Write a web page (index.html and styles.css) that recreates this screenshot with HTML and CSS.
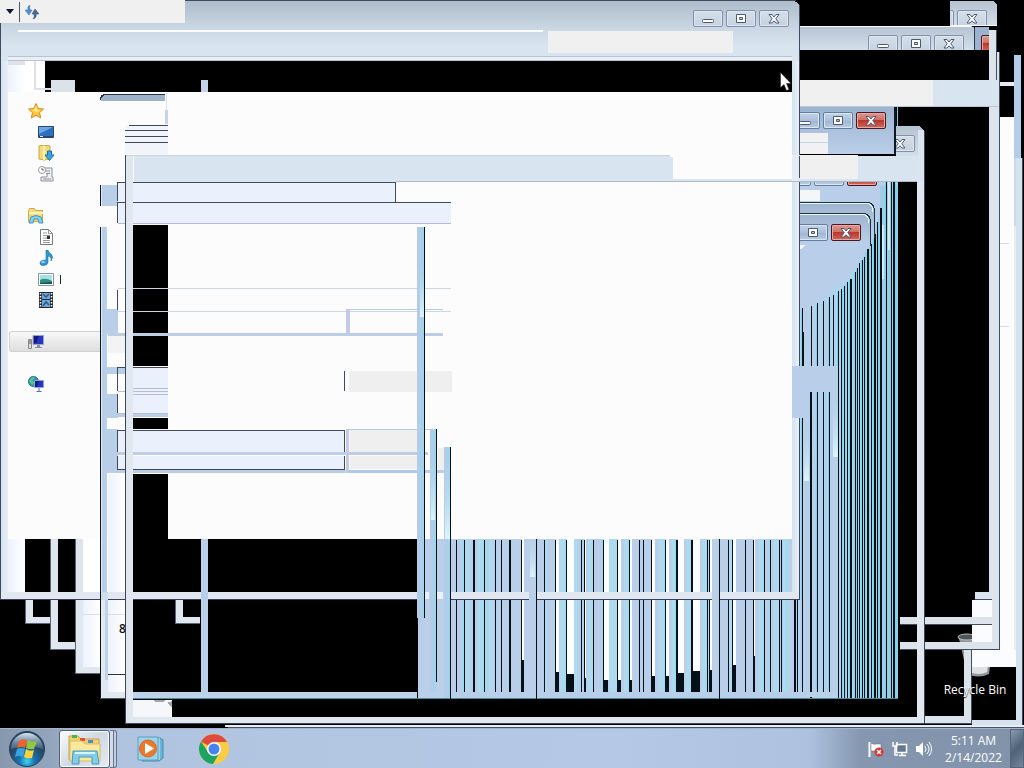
FILE: index.html
```html
<!DOCTYPE html>
<html lang="en">
<head>
<meta charset="utf-8">
<title>Desktop</title>
<meta name="viewport" content="width=device-width, initial-scale=1">
<link rel="stylesheet" href="styles.css">
</head>
<body class="screen">
<svg class="defs" width="0" height="0" aria-hidden="true">
  <symbol id="min" viewBox="0 0 14 10"><rect x="1.500" y="5.500" width="11" height="3" rx="1" fill="#fff" stroke="#4b5876"/></symbol>
  <symbol id="max" viewBox="0 0 14 10"><path d="M2.500 .5h9v8h-9zM5.500 3.500h3v2h-3z" fill="#fff" stroke="#4b5876" fill-rule="evenodd"/></symbol>
  <symbol id="close" viewBox="0 0 14 10"><path d="M2 .5h3l2 2.500 2-2.500h3L8.800 4.700 12 9H9L7 6.800 5 9H2l3.200-4.300z" fill="#fff" stroke="#4b5876"/></symbol>
</svg>
<main class="desktop">
  <svg class="scene" width="1024" height="728" viewBox="0 0 1024 728" shape-rendering="crispEdges" aria-hidden="true">
    <defs>
      <linearGradient id="title" x2="0" y2="1"><stop stop-color="#aebccb"/><stop offset=".45" stop-color="#c9d6e3"/><stop offset=".75" stop-color="#d8e5f0"/></linearGradient>
      <linearGradient id="cap" x2="0" y2="1"><stop stop-color="#b5c2d0"/><stop offset="1" stop-color="#d3dfeb"/></linearGradient>
      <linearGradient id="blue" x2="0" y2="1"><stop stop-color="#9db4ce"/><stop offset="1" stop-color="#bacfea"/></linearGradient>
      <linearGradient id="pale"><stop stop-color="#edf2ff"/><stop offset="1" stop-color="#fff"/></linearGradient>
      <linearGradient id="edge"><stop stop-color="#d4e3f1"/><stop offset="1" stop-color="#e9eff6"/></linearGradient>
      <linearGradient id="strip"><stop stop-color="#bac9e7"/><stop offset="1" stop-color="#9dd6ee"/></linearGradient>
      <linearGradient id="shine" x2="0" y2="1"><stop stop-color="#b7dcf3" stop-opacity="0"/><stop offset="1" stop-color="#def5fa"/></linearGradient>
      <linearGradient id="fan"><stop stop-color="#b9cfe9"/><stop offset=".5" stop-color="#a8d6ef"/><stop offset="1" stop-color="#9bc9e2"/></linearGradient>
    </defs>

    <!-- rightmost window -->
    <path fill="#fcfcfc" d="M1000 117h14v550h-42v-67h28z"/>
    <path fill="#e6e9ef" d="M1000 82h14v4h-14z"/>
    <path fill="#d5e3ef" d="M1015 158h7v567H972v-5h43z"/>
    <path fill="#b3cce8" d="M1014 55h7v103h-7z"/>
    <path fill="#c7daef" d="M1014 158h2v68h-2z"/>
    <path fill="#e6edf3" d="M1014 226h2v441h-2z"/>
    <path fill="#000" d="M972 667h44v53h-44z"/>
    <path fill="#3e4a5c" d="M1022 158h1v567h-1z"/>
    <path fill="#d8dde3" d="M1000 243h9v1h-9zM1000 326h9v1h-9z"/>

    <!-- window behind, right part -->
    <path fill="url(#cap)" d="M950 1h42q4 0 5 5v20h-47z"/>
    <path fill="url(#cap)" d="M800 26h170q4 0 5 4v20H800z"/>
    <path fill="#f5f9fc" d="M800 26h171v1H800zM950 25h47v1h-47z"/>
    <path fill="#9bb3cf" d="M975 27h14v23h-14z"/>
    <path fill="#2f3847" d="M974 28h1v22h-1z"/>
    <path fill="#dce3eb" d="M989 30h8v22h2v598H900v-8h89V107h-53V80h53z"/>
    <path fill="#414c5d" d="M996 30h1v50h-1zM999 52h1v598h-1zM900 649h100v1H900z"/>
    <path fill="#d8e5f0" d="M800 80h198v27H800z"/>
    <path fill="#f0f0f0" d="M800 80h133v27H800z"/>
    <path fill="#bac6d3" d="M800 106h198v1H800z"/>
    <path fill="#dce3eb" d="M900 617h92v7h-92z"/>
    <path fill="#414c5d" d="M900 624h92v1h-92z"/>
    <path fill="#d9e4ee" d="M975 592h17v7h-17z"/>
    <path fill="#fafcff" d="M972 600h20v17h-20zM972 625h20v17h-20z"/>
    <path fill="#414c5d" d="M975 599h17v1h-17z"/>
    <g shape-rendering="auto">
      <path d="M960 642l7 32q11 5 22 0l3-24h-20v-13h-14z" fill="#92979a"/>
      <path d="M964 644l5 28q10 4 18 0l2-15-9 5-12-14z" fill="#dfe2e2"/>
      <ellipse cx="967" cy="637" rx="9" ry="3" fill="#4f5557" stroke="#b9c0c2"/>
    </g>
    <path fill="#fafcff" d="M972 625h20v17h-20zM972 650h44v17h-44z"/>
    <path fill="#dce3eb" d="M900 642h99v7h-99zM964 650h7v73h-47v-7h40z"/>
    <path fill="#414c5d" d="M900 649h99v1h-99zM971 650h1v74h-1zM924 723h48v1h-48z"/>

    <!-- blue window pieces -->
    <path fill="url(#blue)" d="M800 107h95v47h-95z"/>
    <path fill="#f1f1f3" d="M800 133h28v21h-28z"/>
    <path fill="#c6d4e8" d="M800 142h28v1h-28z"/>
    <path fill="#0c1824" d="M894 107h2v48h-2z"/><path fill="#78cbdc" d="M897 107h1v20h-1z"/>
    <path fill="url(#cap)" d="M896 126h22q5 1 6 6v25h-28z"/>

    <!-- fan of window edges -->
    <path fill="#b9cfe9" d="M792 182h106v516H792z"/>
    <path fill="url(#fan)" d="M800 308C844 290 874 260 880 208V186h18v512h-98z"/>
    <path fill="#f4f6f8" d="M800 190h20v11h-20z"/>
    <path fill="url(#blue)" d="M800 202h68q6 0 6 7v24h-74z"/>
    <path fill="none" stroke="#1d3340" d="M800 202.500h67q7 0 7.500 8v27"/>
    <path fill="none" stroke="#eaf5fb" d="M800 203.500h66q7 0 7 8"/>
    <path fill="url(#blue)" d="M800 213h64q6 0 6 7v24h-70z"/>
    <path fill="none" stroke="#1d3340" d="M800 213.500h63q7 0 7.500 8v24"/>
    <path fill="none" stroke="#edf7fc" d="M800 214.500h62q7 0 7 8"/>
    <path fill="#f0f5fa" d="M800 245h5l-3 4h-2z"/>
    <path fill="#d0ecf8" d="M882 225h2v54h-2zM888 182h2v68h-2z"/>
    <path stroke="#78d6ee" d="M801.500 310V698M816.500 305V690M828.500 300V690M837.500 295V698M842.500 290V698M845.500 284V698M849.500 281V698M854.500 274V698M856.500 270V698M861.500 260V698M865.500 252V698M869.500 248V698M873.500 240V698M878.500 222V698M885.500 182V698M890.500 182V698M895.500 182V698M897.500 182V698"/>
    <path stroke="#061019" d="M802.500 308V698M811.500 306V692M817.500 303V692M823.500 301V692M829.500 297V692M833.500 295V366M838.500 291V698M841.500 289V698M844.500 286V698M847.500 282V698M850.500 279V698M851.500 279V698M855.500 272V698M857.500 268V698M859.500 263V698M862.500 260V698M864.500 257V698M867.500 249V698M868.500 249V698M871.500 244V698M874.500 238V698M875.500 234V698M877.500 222V698M880.500 208V698M881.500 208V698M886.500 182V698M891.500 182V698M893.500 182V698M894.500 182V698"/>
    <path stroke="#061019" stroke-width="2" d="M811 392V698M803 332V366"/>
    <path fill="#b9cfe9" d="M792 366h47v26h-34v26h-13zM830 392h8v306h-8z"/>
    <path fill="url(#shine)" d="M833 400h5v57h-5z"/><path fill="url(#shine)" d="M804 430h5v51h-5z"/>
    <path fill="#061019" d="M838 366h1v332h-1z"/>
    <path fill="#b9d2ea" d="M804 692h34v5h-34z"/>
    <path fill="#3c94a4" d="M804 698h94v1h-94z"/>

    <!-- large explorer window -->
    <path fill="url(#title)" d="M0 1h793q6 1 7 7v53H0z"/>
    <path fill="#3f4c60" d="M0 0h796v1H0zM0 8h1v592H0zM799 5h1v361h-1zM799 418h1v182h-1z"/>
    <path fill="#fcfdff" d="M18 30h525v2H18z"/>
    <path fill="#b7c5d3" d="M8 56h784v1H8zM8 60h784v1H8z"/>
    <path fill="#eceef5" d="M8 57h784v3H8z"/>
    <path fill="#f0f0f0" d="M548 31h185v22H548z"/>
    <path fill="#000" d="M45 61h747v31H45z"/>
    <path fill="url(#edge)" d="M1 61h7v539H1z"/><path fill="url(#edge)" d="M792 61h7v305h-7zM792 418h7v182h-7z"/>
    <path fill="#fff" d="M8 61h37v31H8z"/><path fill="url(#pale)" d="M8 65h17v27H8z"/>
    <path fill="#dfe0e9" d="M8 61h17v4H8zM34 61h2v27h15v2H34z"/>
    <path fill="#dce2ea" d="M51 80h24v12H51z"/><path fill="#c4d3e8" d="M201 80h7v12h-7z"/>
    <path fill="#fcfcfc" d="M8 92h784v447H8z"/>
    <path fill="#9eb3c8" d="M101 101q0-6 5-6h59v6h-64z"/><path fill="#27313e" d="M100 100q0-6 6-6h59v1h-59q-5 1-5 5z"/>
    <path fill="#dbe0e7" d="M166 93h1v17h-1z"/><path fill="#c7d4e6" d="M165 110h3v14h-3z"/>
    <path fill="#f1f4fb" d="M125 125h43v29h-43z"/>
    <path stroke="#3e4a5b" d="M129 125.500h39M125 130.500h43M125 136.500h43M125 142.500h43"/>

    <!-- dropped content below the large window -->
    <path fill="#fff" d="M83 539h42v153h-24v-25H83z"/><path fill="url(#pale)" d="M8 539h17v53H8z"/><path fill="url(#pale)" d="M83 600h17v67H83z"/>
    <path fill="#000" d="M25 539h25v53H25zM58 539h17v53H58zM133 539h284v153H133z"/>
    <path fill="#dfe4ed" d="M50 539h8v53h-8zM75 539h8v53h-8z"/>
    <path fill="#e1e7ee" d="M26 600h7v17h17v6H26zM51 600h7v42h17v7H51zM76 600h7v67h17v6H76zM176 600h7v17h17v6h-24z"/>
    <path fill="#5a6678" d="M25 600h1v24h-1zM25 623h25v1H25zM50 539h1v110h-1zM50 649h25v1H50zM75 539h1v135h-1zM75 673h25v1H75zM175 600h1v24h-1zM175 623h25v1h-25z"/>
    <path fill="#d9dfe6" d="M83 614h42v1H83z"/>

    <!-- second window, left part -->
    <path fill="#e4eaf1" d="M101 185h1v21h-1zM101 227h1v471h-1z"/>
    <path fill="#b9cfe9" d="M102 185h16v21h-16zM102 227h5v465h-5zM107 309h11v25h-11zM107 367h18v7h-18zM107 394h11v24h-11zM107 429h11v44h-11z"/>
    <path fill="url(#pale)" d="M108 474h17v118h-17z"/><path fill="url(#pale)" d="M108 600h17v92h-17z"/>
    <path fill="#e2e8ef" d="M102 600h6v92h17v6h-23z"/><path fill="#bdd3ea" d="M105 600h3v80h-3z"/>
    <path fill="#2c3542" d="M108 674h17v1h-17z"/>
    <path fill="#d9dfe6" d="M108 614h17v1h-17z"/>
    <path fill="#f3f3f3" d="M108 336h17v17h-17z"/>

    <!-- front window -->
    <path fill="#c8d1da" d="M125 155h675v1H125z"/>
    <path fill="#d8e5f0" d="M134 156h790v26H134z"/>
    <path fill="#f0f0f0" d="M673 155h185v24H673z"/><path fill="#fcfcfc" d="M673 155h119v24H673z"/>
    <path fill="#e6ecf3" d="M792 156h7v25h-7z"/><path fill="#3f4c60" d="M799 156h1v22h-1z"/>
    <path fill="#acbccb" d="M396 181h521v1H396z"/>
    <path fill="#fcfcfc" d="M670 155h3v2h-3zM396 182h396v20H396zM451 202h341v23H451z"/>
    <path fill="#eaf1fd" d="M118 183h277v19H118zM118 203h333v20H118zM133 367h35v49h-35zM118 431h227v22H118zM118 456h227v13H118z"/>
    <path fill="none" stroke="#3f4a5d" d="M117.500 201V182.500H395.500V202M117.500 223V202.500H451M117.500 290v20M168 367.500H117.500V391M117.500 394V413M117.500 452V430.500H344.500V452M117.500 456V469.500H344.500V456M344.500 371v20"/>
    <path stroke="#b2bfce" d="M118 223.500h333M133 388.500h35M118 391.500h50M133 394.500h35M118 413.500h50"/>
    <path stroke="#cdd6df" d="M118 288.500h333M118 311.500h333"/>
    <path stroke="#bccde4" stroke-width="3" d="M108 334.500h335M118 415.500h50M108 453.500h320M108 471.500h336"/>
    <path fill="#c3cbe8" d="M346 309h4v25h-4zM346 429h3v42h-3z"/>
    <path fill="#b9cad9" d="M350 309h93v1h-93zM349 429h82v1h-82z"/>
    <path fill="#efefef" d="M349 371h103v21H349zM350 430h67v22h-67zM350 456h67v13h-67zM438 448h6v22h-6z"/>
    <path fill="#000" d="M133 225h35v63h-35zM133 289h35v22h-35zM133 312h35v21h-35zM133 336h35v30h-35zM133 418h35v11h-35zM133 474h35v65h-35zM133 699h784v18H133z"/>
    <path fill="#aecaeb" d="M349 470h68v3h-68z"/>

    <!-- lower stripes -->
    <path fill="#b9cfe9" d="M418 539h374v159H418zM792 600h12v98h-12z"/>
    <path fill="#aed9ef" d="M464 539h6v153h-6zM478 539h6v153h-6zM489 539h4v153h-4zM544 539h3v153h-3zM560 539h6v153h-6zM574 539h3v153h-3zM588 539h5v153h-5zM609 539h8v153h-8zM624 539h5v153h-5zM658 539h6v153h-6zM672 539h4v153h-4zM686 539h5v153h-5zM702 539h5v153h-5zM728 539h4v153h-4zM759 539h5v153h-5zM774 539h5v153h-5zM783 539h5v153h-5zM797 600h3v92h-3z"/>
    <path fill="#061019" d="M522 660h2v32h-2zM556 672h3v20h-3zM567 674h7v18h-7zM585 678h1v14h-1zM604 680h4v12h-4zM618 680h3v12h-3zM630 680h2v12h-2zM652 676h3v16h-3zM666 676h3v16h-3zM678 673h6v19h-6zM693 671h7v21h-7zM710 670h2v22h-2zM733 665h3v27h-3zM754 656h1v36h-1z"/>
    <path fill="#fdfeff" d="M522 539h2v121h-2zM556 539h3v133h-3zM567 539h7v135h-7zM585 539h1v139h-1zM604 539h5v141h-5zM618 539h3v141h-3zM630 539h2v141h-2zM652 539h3v137h-3zM666 539h3v137h-3zM678 539h6v134h-6zM693 539h7v132h-7zM710 539h2v131h-2zM733 539h3v126h-3zM754 539h1v117h-1z"/>
    <path stroke="#8ce0f1" d="M463.500 540V692M483.500 540V692M487.500 540V692M565.500 540V692M580.500 540V692M602.500 540V692M628.500 540V692M664.500 540V692M675.500 540V692M706.500 540V692M763.500 540V692M769.500 540V692M786.500 540V692"/>
    <path stroke="#061019" d="M456.500 540V692M464.500 540V692M484.500 540V692M495.500 540V692M501.500 540V692M521.500 540V692M544.500 540V692M555.500 540V692M566.500 540V692M581.500 540V692M584.500 540V692M593.500 540V692M603.500 540V692M617.500 540V692M629.500 540V692M639.500 540V692M643.500 540V692M651.500 540V692M665.500 540V692M707.500 540V692M709.500 540V692M728.500 540V692M732.500 540V692M745.500 540V692M753.500 540V692M764.500 540V692M770.500 540V692M779.500 540V692M781.500 540V692M797.500 600V692M802.500 540V692"/>
    <path stroke="#061019" stroke-width="2" d="M474 540V692M510 540V692M677 540V692M692 540V692M795 600V692"/>
    <path fill="#bed3e9" d="M133 692h284v6H133z"/>

    <!-- lower frame of the large window -->
    <path fill="#e0e7f0" d="M1 592h798v7H1z"/><path fill="#35435a" d="M0 599h800v1H0z"/>
    <path fill="#b9d0e8" d="M201 539h7v153h-7zM529 539h7v159h-7zM712 539h7v159h-7zM425 592h25v106h-25z"/>
    <path fill="url(#shine)" d="M530 539h5v38h-5z"/>
    <path fill="#eaf0f6" d="M425 592h4v7h-4zM437 592h6v7h-6z"/>
    <path fill="#438f9d" d="M133 698h765v1H133z"/>
    <path fill="#061019" d="M536 539h1v160h-1zM719 539h1v160h-1z"/>
    <path fill="url(#strip)" d="M417 227h7v391h-7z"/><path fill="url(#strip)" d="M430 429h6v263h-6z"/><path fill="url(#strip)" d="M444 447h6v251h-6z"/>
    <path fill="url(#shine)" d="M420 265h4v52h-4z"/><path fill="url(#shine)" d="M431 460h4v60h-4z"/><path fill="url(#shine)" d="M445 460h5v79h-5z"/>
    <path fill="#061019" d="M424 227h1v391h-1zM436 429h1v253h-1zM450 447h1v252h-1z"/>

    <!-- second window edge over the large frame -->
    <path fill="#cfdeed" d="M101 592h7v8h-7z"/>
    <path fill="#10161f" d="M100 185h1v21h-1zM100 227h1v472h-1z"/><path fill="#4a5566" d="M100 698h25v1h-25z"/>

    <!-- front window frame -->
    <path fill="#e0e7ee" d="M126 156h7v561h784V182h7v541H126z"/>
    <path fill="#dce5ef" d="M918 130h6v52h-6z"/>
    <path fill="#3b4656" d="M125 155h1v569h-1zM125 723h800v1H125zM924 131h1v593h-1z"/>
    <path fill="#f5f7fb" d="M133 700h39v17h-39z"/><path fill="#9aabb0" d="M153 700h12l-2 2h-8zM167 703l5-2v6z"/>
    <path fill="#e7edf3" d="M225 725h799v2H225z"/><path fill="#465366" d="M228 727h796v1H228z"/>
    <path fill="#222" d="M60 275h1v9h-1z"/>
  </svg>

  <div class="toolbar">
    <button class="tool drop" aria-label="Menu"><svg width="8" height="5" viewBox="0 0 8 5"><path d="M0 0h8L4 5z" fill="#10182c"/></svg></button>
    <button class="tool refresh" aria-label="Refresh"><svg width="14" height="14" viewBox="0 0 14 14"><path d="M5 0Q2 1 3 5H0l4 5 3-5H5q-1-3 0-5z" fill="#538fce" stroke="#376da8" stroke-width=".5"/><path d="M8 14q4-1 3-5h3l-4-5-3 5h2q1 3-1 5z" fill="#456b96" stroke="#304b6e" stroke-width=".5"/></svg></button>
  </div>

  <nav class="places" aria-label="Places">
    <a class="place head" href="#" aria-label="Favorites"><svg viewBox="0 0 16 16"><path d="M8 .5l2.200 5 5.300.5-4 3.700 1.200 5.300L8 12.200 3.300 15l1.200-5.300-4-3.700 5.300-.5z" fill="#ffc83e" stroke="#d88a20"/><path d="M8 2l1 5 4 0-4 2-5-2 3-1z" fill="#ffea8a"/></svg></a>
    <a class="place" href="#" aria-label="Desktop"><svg viewBox="0 0 16 16"><path d="M.5 2.500h15v11H.5z" fill="#2e6fc0" stroke="#244a78"/><path d="M1 3h14L1 10z" fill="#6da6e4"/><path d="M1 12h14v2H1z" fill="#234672"/><path d="M2 12h3v1H2z" fill="#e7f3fb"/></svg></a>
    <a class="place" href="#" aria-label="Downloads"><svg viewBox="0 0 16 16"><path d="M1 1l5-1 6 1v13l-6 1-5-1z" fill="#f3db77" stroke="#c5a448"/><path d="M6 1v14" stroke="#fff2ae" stroke-width="2"/><path d="M9.500 6h4v4H16l-4.500 5.500L7 10h2.500z" fill="#3aa3e3" stroke="#1b70ad"/></svg></a>
    <a class="place" href="#" aria-label="Recent Places"><svg viewBox="0 0 16 16"><path d="M5 2h9v9h1v4H3v-4h6V8" fill="#eff0f2" stroke="#8b8f96"/><path d="M7 5h5M8 7.500h4M5 13h8" stroke="#8b8f96"/><circle cx="4" cy="4" r="3.500" fill="#fff" stroke="#959aa2"/><path d="M4 2v2h2" fill="none" stroke="#666"/></svg></a>
    <a class="place head gap" href="#" aria-label="Libraries"><svg viewBox="0 0 16 16"><path d="M.5 2.500l1-2h5l1 2h7v11H.5z" fill="#f4da7c" stroke="#d1a944"/><path d="M1 5h14" stroke="#fff4b8" stroke-width="2"/><path d="M3 9q5-3 10 0l2 6h-4l-1-4H6l-1 4H1z" fill="#86d0ef" stroke="#4094c2"/></svg></a>
    <a class="place" href="#" aria-label="Documents"><svg viewBox="0 0 16 16"><path d="M2.500.5h8l4 4v11h-12z" fill="#fff" stroke="#747a80"/><path d="M10.500.5v4h4M5 4h4M5 6.500h7M5 9h4M5 11.500h7M5 13.500h7" fill="none" stroke="#999"/><path d="M9 7h3v3H9z" fill="#333"/></svg></a>
    <a class="place" href="#" aria-label="Music"><svg viewBox="0 0 16 16"><path d="M8 0h2q0 2 3 4 3 3 0 7 1-4-3-5v6q0 3-4 3.500-4 .5-4-2.500 0-3 6-3z" fill="#2f98d4" stroke="#1b6d9f" stroke-width=".6"/><ellipse cx="5" cy="12" rx="2" ry="1" fill="#90d3f2"/></svg></a>
    <a class="place" href="#" aria-label="Pictures"><svg viewBox="0 0 16 16"><path d="M.5 2.500h15v12H.5z" fill="#fff" stroke="#8597a3"/><path d="M2 4h12v9H2z" fill="#a7def0"/><path d="M2 9q5-3 12 1v3H2z" fill="#2c936e"/><path d="M2 12l12-1v2H2z" fill="#174e69"/></svg></a>
    <a class="place" href="#" aria-label="Videos"><svg viewBox="0 0 16 16"><path d="M1 0h14v16H1z" fill="#25292f"/><path d="M4 1h8v6H4zM4 8h8v7H4z" fill="#6aa8dd"/><path d="M5 2l3 3 3-3M5 14l3-4 3 3" fill="none" stroke="#34567c" stroke-width="1.500"/><path d="M2.500 1v15M13.500 1v15" stroke="#fff" stroke-width="1.500" stroke-dasharray="1.500 1.500"/></svg></a>
    <a class="place head gap chosen" href="#" aria-label="Computer"><svg viewBox="0 0 16 16"><path d="M5 1.500h10.500v9H5z" fill="#2832c7" stroke="#9ba5bb"/><path d="M6 2h5l-3 7H6z" fill="#151a73"/><path d="M9 11h3v2h2v1H7v-1h2z" fill="#8990a2"/><path d="M.5 5.500h3v9h-3z" fill="#dedede" stroke="#888"/><path d="M1 7h2M1 9h2" stroke="#555"/></svg></a>
    <a class="place head gap" href="#" aria-label="Network"><svg viewBox="0 0 16 16"><circle cx="5.500" cy="5.500" r="5" fill="#3198b5" stroke="#246e8e"/><path d="M1 5q3-5 6-4l-3 4 3 1-3 3z" fill="#57c88a"/><path d="M6.500 4.500h9v7h-9z" fill="#2a31c3" stroke="#8fa6cf"/><path d="M7 5h4l-2 6H7z" fill="#151d80"/><path d="M11 12v3M8.500 15.500h5" stroke="#5772bd"/></svg></a>
  </nav>

  <div class="controls front">
    <button class="control" aria-label="Minimize"><svg><use href="#min"/></svg></button>
    <button class="control" aria-label="Maximize"><svg><use href="#max"/></svg></button>
    <button class="control" aria-label="Close"><svg><use href="#close"/></svg></button>
  </div>
  <div class="controls top-right">
    <button class="control" aria-label="Maximize"></button>
    <button class="control" aria-label="Close"><svg><use href="#close"/></svg></button>
  </div>
  <div class="controls behind">
    <button class="control" aria-label="Minimize"><svg><use href="#min"/></svg></button>
    <button class="control" aria-label="Maximize"><svg><use href="#max"/></svg></button>
    <button class="control" aria-label="Close"><svg><use href="#close"/></svg></button>
  </div>
  <div class="controls sliver"><button class="control red" aria-label="Close"></button></div>
  <div class="controls active">
    <button class="control" aria-label="Minimize"><svg><use href="#min"/></svg></button>
    <button class="control" aria-label="Maximize"><svg><use href="#max"/></svg></button>
    <button class="control red" aria-label="Close"><svg><use href="#close"/></svg></button>
  </div>
  <div class="controls corner"><button class="control" aria-label="Close"><svg><use href="#close"/></svg></button></div>
  <div class="controls stub">
    <button class="control" aria-label="Minimize"></button>
    <button class="control" aria-label="Maximize"></button>
    <button class="control red" aria-label="Close"></button>
  </div>
  <div class="controls inner">
    <button class="control" aria-label="Maximize"><svg><use href="#max"/></svg></button>
    <button class="control red" aria-label="Close"><svg><use href="#close"/></svg></button>
  </div>

  <span class="count">8</span>
  <a class="bin" href="#">Recycle Bin</a>
  <svg class="pointer" width="12" height="19" viewBox="0 0 12 19" aria-hidden="true"><path d="M.5.500v15l3.500-3 2.500 6 2.500-1-2.500-6H11z" fill="#fff" stroke="#222" stroke-width=".5"/></svg>
</main>

<footer class="taskbar">
  <button class="start" aria-label="Start"><svg width="38" height="38" viewBox="0 0 38 38">
    <defs><radialGradient id="orb" cy=".85"><stop stop-color="#42d5f5"/><stop offset=".45" stop-color="#1573ac"/><stop offset="1" stop-color="#284766"/></radialGradient><linearGradient id="gloss" x2="0" y2="1"><stop stop-color="#d6e5ee"/><stop offset="1" stop-color="#7894ac" stop-opacity=".35"/></linearGradient></defs>
    <circle cx="19" cy="19" r="17.500" fill="url(#orb)" stroke="#24405c"/><path d="M3 19a16 16 0 0 1 32 0q-16-6-32 0z" fill="url(#gloss)"/>
    <path d="M11 11q4-3 8-1l-2 8q-4-2-8 0z" fill="#f0632c"/><path d="M20 10q4 3 9 1l-3 8q-4 1-8-1z" fill="#93c83e"/><path d="M9 19q4-2 8 0l-2 8q-4-2-8 0z" fill="#35a5e1"/><path d="M18 19q4 3 8 1l-2 8q-5 1-8-1z" fill="#ffd13c"/>
  </svg></button>
  <button class="task current" aria-label="File Explorer"><svg width="34" height="32" viewBox="0 0 34 32">
    <path d="M1 3h9l3 3h18v21H1z" fill="#efd174" stroke="#c6a34d"/><path d="M4 2h5v3H4z" fill="#4ab647"/><path d="M12 5h5v3h-5z" fill="#df5533"/><path d="M20 7h5v3h-5z" fill="#4a8dcc"/><path d="M2 8h12l3 3h15v17H2z" fill="#fae99a" stroke="#d9bd63"/><path d="M5 18h24l2 13h-7v-7H11v7H4z" fill="#82cdea" stroke="#4999bf"/><path d="M7 20h20" stroke="#d5f4fc" stroke-width="2"/>
  </svg></button>
  <span class="stack"></span>
  <button class="task media" aria-label="Media Player"><svg width="28" height="26" viewBox="0 0 28 26">
    <path d="M5 2h18l3 2v18l-4 3H5z" fill="#68b5d8" stroke="#468caf"/><path d="M22 2v22" stroke="#d2f0f7"/><path d="M1 1h20v23H1z" fill="#9dd3e9" stroke="#5da0bf"/><circle cx="11" cy="12.500" r="8.500" fill="#e9792c" stroke="#d36a2b"/><path d="M8 7l9 5.500L8 18z" fill="#fff"/>
  </svg></button>
  <button class="task chrome" aria-label="Chrome"><svg width="30" height="30" viewBox="0 0 30 30">
    <circle cx="15" cy="15" r="15" fill="#fdcc44"/><path d="M15 15L2 7.500A15 15 0 0 1 28 8H15z" fill="#dd4b3e"/><path d="M2 7.500A15 15 0 0 0 14 30l7-12-6 3-6-3z" fill="#1da462"/><circle cx="15" cy="15" r="7" fill="#fff"/><circle cx="15" cy="15" r="5.500" fill="#4a83ee"/>
  </svg></button>
  <div class="tray">
    <button class="status" aria-label="Action Center"><svg width="16" height="16" viewBox="0 0 16 16"><path d="M1.500 1v15" stroke="#fff" stroke-width="2"/><path d="M3 2q3 2 5 1l5 0v7H3z" fill="#fff" stroke="#59667a" stroke-width=".5"/><circle cx="11" cy="11" r="4.500" fill="#d8352c"/><path d="M9 9l4 4M13 9l-4 4" stroke="#fff" stroke-width="1.500"/></svg></button>
    <button class="status" aria-label="Network status"><svg width="16" height="16" viewBox="0 0 16 16"><path d="M4.500 3.500h10v8h-10z" fill="#63778f" stroke="#fff" stroke-width="1.500"/><path d="M7 14.500h7M10 12v2" stroke="#fff" stroke-width="1.500"/><path d="M1 1v4h4V1M3 5v9h3" fill="none" stroke="#fff" stroke-width="1.500"/></svg></button>
    <button class="status" aria-label="Volume"><svg width="16" height="16" viewBox="0 0 16 16"><path d="M0 5h3l4-4v14l-4-4H0z" fill="#fff"/><path d="M9 5q2 3 0 6M11 3q4 5 0 10M13 1q5 7 0 14" fill="none" stroke="#fff"/></svg></button>
    <button class="clock"><span>5:11 AM</span><span>2/14/2022</span></button>
  </div>
  <button class="peek" aria-label="Show desktop"></button>
</footer>
</body>
</html>
```
FILE: styles.css
```css
* { box-sizing: border-box; }
.screen { margin: 0; min-height: 100vh; display: flex; flex-direction: column; overflow: hidden; background: #000; font-family: "Open Sans", "Noto Sans", sans-serif; font-size: 12px; }
button { padding: 0; border: 0; background: none; font: inherit; color: inherit; }
svg { display: block; }
.defs { position: absolute; }
.desktop { position: relative; flex: 1; min-height: 728px; }
.scene { position: absolute; top: 0; left: 0; }

.toolbar { position: absolute; top: 0; left: 0; width: 185px; height: 23px; display: flex; align-items: center; background: #f0f0f0; }
.tool { display: flex; align-items: center; justify-content: center; }
.drop { width: 20px; height: 20px; border-right: 1px solid #555; }
.refresh { width: 24px; height: 20px; }

.places { position: absolute; top: 100px; left: 9px; width: 91px; display: flex; flex-direction: column; }
.place { height: 21px; display: flex; align-items: center; padding-left: 29px; }
.place svg { width: 16px; height: 16px; }
.head { padding-left: 19px; }
.gap { margin-top: 21px; }
.chosen { border: 1px solid #d0d0d0; border-right: 0; border-radius: 3px 0 0 3px; padding-left: 18px; background: linear-gradient(#f8f8f8, #dedede); }

.controls { position: absolute; display: flex; gap: 3px; overflow: hidden; }
.control { flex: none; width: 30px; height: 17px; display: flex; align-items: center; justify-content: center; border: 1px solid #8191ab; border-radius: 2px; background: linear-gradient(#d5dfe9, #c5d2df); box-shadow: inset 0 0 0 1px #dde6ef; }
.control svg { width: 14px; height: 10px; }
.red { border-color: #4c1722; background: linear-gradient(#dc9a90, #cf6e61 48%, #b9382b 50%, #d1695c); box-shadow: inset 0 0 0 1px #e3aaa3; }
.front { left: 693px; top: 10px; }
.top-right { left: 950px; top: 10px; width: 37px; height: 15px; justify-content: flex-end; }
.behind { left: 868px; top: 35px; height: 15px; }
.sliver { left: 981px; top: 35px; width: 8px; height: 15px; }
.active { left: 800px; top: 112px; width: 86px; justify-content: flex-end; }
.corner { left: 896px; top: 135px; width: 19px; justify-content: flex-end; }
.stub { left: 800px; top: 182px; width: 77px; height: 4px; justify-content: flex-end; align-items: flex-end; }
.inner { left: 800px; top: 224px; width: 61px; justify-content: flex-end; }
.active .control:not(.red), .stub .control:not(.red), .inner .control:not(.red) { border-color: #637da3; background: linear-gradient(#c5d5e8, #a9bfda 50%, #9cb4d2 50%, #b9cde5); }

.count { position: absolute; left: 119px; top: 621px; width: 6px; overflow: hidden; line-height: 16px; font-weight: 600; color: #111; }
.bin { position: absolute; left: 936px; top: 682px; width: 78px; line-height: 16px; text-align: center; color: #fff; text-decoration: none; text-shadow: 0 1px 1px #000; }
.pointer { position: absolute; left: 780px; top: 72px; }

.taskbar { flex: none; height: 40px; display: flex; align-items: center; border-top: 1px solid #a4b3c9; background: linear-gradient(90deg, #8798ae, #93a5bd 50px, #b0c3df 120px, #b5c8e5 60%, #aec2e0 79%, #8597b0 84%, #8193a9); }
.start { margin-left: 8px; }
.task { height: 38px; display: flex; align-items: center; justify-content: center; }
.current { width: 51px; margin-left: 13px; border: 1px solid #4f6179; border-radius: 3px; background: linear-gradient(135deg, #fbfcfd, #cfd8e3 50%, #e4eaf0); box-shadow: inset 0 0 0 1px #f9fbfd; }
.stack { width: 7px; height: 38px; border: 1px solid #62738b; border-left: 0; border-radius: 0 3px 3px 0; background: linear-gradient(90deg, #d3dce8 3px, #62738b 3px, #62738b 4px, #c3cfdf 4px); }
.media { margin-left: 20px; }
.chrome { margin-left: 34px; }
.tray { margin-left: auto; display: flex; align-items: center; gap: 8px; color: #fff; }
.clock { width: 67px; display: flex; flex-direction: column; align-items: center; line-height: 17px; }
.peek { width: 14px; height: 39px; margin-left: 3px; border: 1px solid #53647b; background: linear-gradient(135deg, #8a9bb0, #4f6279 50%, #72859b); }
```
